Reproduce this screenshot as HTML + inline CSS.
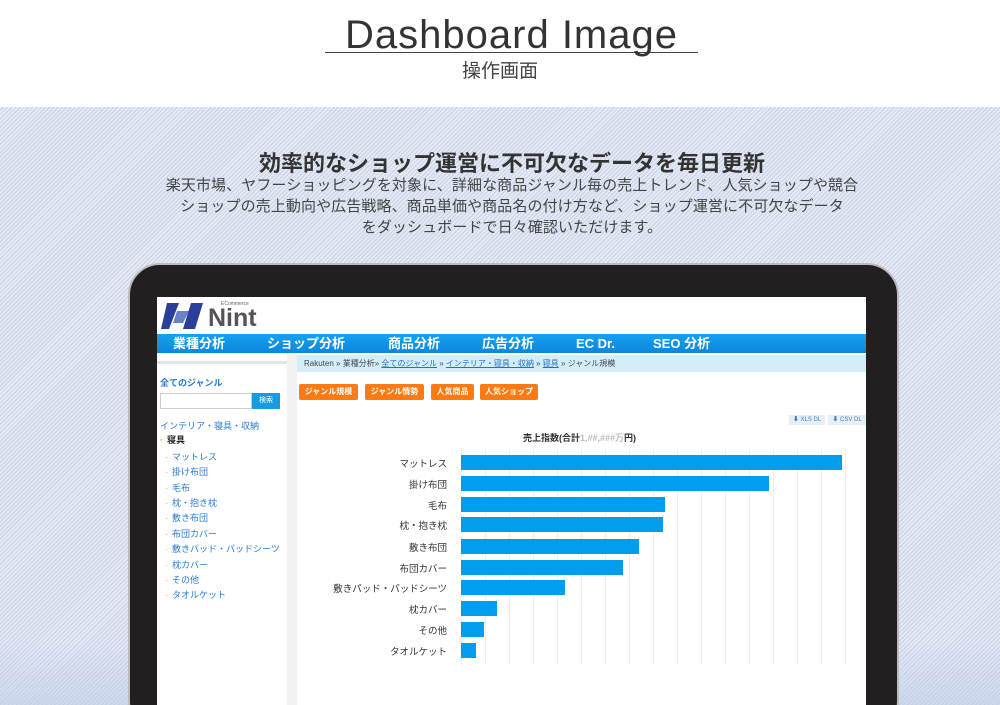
<!DOCTYPE html>
<html><head><meta charset="utf-8"><style>
*{margin:0;padding:0;box-sizing:border-box}
html,body{width:1000px;height:705px;overflow:hidden}
body{background:#fff;font-family:"Liberation Sans","Noto Sans CJK JP",sans-serif;position:relative}
.abs{position:absolute}
.bg{left:0;top:107px;width:1000px;height:598px;background:repeating-linear-gradient(135deg,#e4e9f4 0px,#e4e9f4 2px,#c8d2e8 2px,#c8d2e8 3px)}
.bgb{left:0;top:640px;width:1000px;height:65px;background:linear-gradient(180deg,rgba(200,212,232,0),rgba(190,205,230,.6))}
h1{position:absolute;left:325px;top:12px;width:373px;text-align:center;font-weight:normal;font-size:40px;letter-spacing:1px;color:#333;line-height:46px;border-bottom:1.5px solid #444;height:41px}
.sub{left:0;width:1000px;top:56px;text-align:center;font-size:19px;color:#444}
.h2{left:12px;width:1000px;top:146px;text-align:center;font-size:22px;font-weight:bold;color:#333}
.p{left:12px;width:1000px;top:175px;text-align:center;font-size:15px;line-height:21px;color:#444;letter-spacing:0.1px}
.bezel{left:128px;top:263px;width:771px;height:470px;background:#231f20;border-radius:32px;border:2px solid #bbb}
.screen{left:157px;top:297px;width:709px;height:408px;background:#fff;overflow:hidden}
.nav{left:0;top:37px;width:709px;height:19px;background:linear-gradient(#1aa0f0,#0a88dc);color:#fff;font-weight:bold;font-size:13px;line-height:19px}
.nav span{position:absolute;top:0}
.side{left:0;top:64px;width:130px;height:344px;background:#fff;border-top:3px solid #dde6ee}
.gcol{left:130px;top:56px;width:10px;height:352px;background:#f2f2f2}
.bc{left:140px;top:58px;width:569px;height:17px;background:#d3eef6;font-size:8px;color:#445;line-height:17px;padding-left:7px}
.bc u{color:#2a70c0}
.btn{top:87px;height:16px;background:#ff7a10;color:#fff;font-size:8px;font-weight:bold;line-height:16px;text-align:center;border-radius:2px}
.sl{font-size:9px;color:#2a7bd0;position:absolute;left:8px}
.dot{color:#f5a030;margin-right:4px}
.lab{position:absolute;right:0;font-size:9.5px;color:#333;text-align:right;width:150px}
.bar{position:absolute;left:0;height:15px;background:#019ef0}
</style></head><body>
<h1>Dashboard Image</h1>
<div class="abs sub">操作画面</div>
<div class="abs bg"></div>
<div class="abs bgb"></div>
<div class="abs h2">効率的なショップ運営に不可欠なデータを毎日更新</div>
<div class="abs p">楽天市場、ヤフーショッピングを対象に、詳細な商品ジャンル毎の売上トレンド、人気ショップや競合<br>ショップの売上動向や広告戦略、商品単価や商品名の付け方など、ショップ運営に不可欠なデータ<br>をダッシュボードで日々確認いただけます。</div>
<div class="abs bezel"></div>
<div class="abs screen">
 <svg class="abs" style="left:4px;top:6px" width="44" height="26" viewBox="0 0 44 26"><polygon points="6,0 18,0 8,26 0,26" fill="#2a3f9a"/><polygon points="16,8 28,8 22,20 12,20" fill="#6a80c8"/><polygon points="30,0 42,0 34,26 22,26" fill="#2a3f9a"/></svg>
 <div class="abs" style="left:51px;top:7px;font-size:25px;font-weight:bold;color:#555;line-height:28px">Nint</div>
 <div class="abs" style="left:64px;top:4px;font-size:5px;color:#666">ECommerce</div>
 <div class="abs nav"><span style="left:16px">業種分析</span><span style="left:110px">ショップ分析</span><span style="left:231px">商品分析</span><span style="left:325px">広告分析</span><span style="left:419px">EC Dr.</span><span style="left:496px">SEO 分析</span></div>
 <div class="abs gcol"></div>
 <div class="abs side">
  <div class="sl" style="left:3px;top:12px;font-weight:bold">全てのジャンル</div>
  <div class="abs" style="left:3px;top:29px;width:92px;height:16px;border:1px solid #ccc"></div>
  <div class="abs" style="left:95px;top:29px;width:28px;height:16px;background:#1a9ae0;color:#fff;font-size:7px;line-height:16px;text-align:center">検索</div>
  <div class="sl" style="left:3px;top:55px">インテリア・寝具・収納</div>
  <div class="sl" style="left:3px;top:69px;color:#222;font-weight:bold"><span class="dot">·</span>寝具</div>
  <div class="sl" style="top:86px"><span class="dot">·</span>マットレス</div>
  <div class="sl" style="top:101px"><span class="dot">·</span>掛け布団</div>
  <div class="sl" style="top:117px"><span class="dot">·</span>毛布</div>
  <div class="sl" style="top:132px"><span class="dot">·</span>枕・抱き枕</div>
  <div class="sl" style="top:147px"><span class="dot">·</span>敷き布団</div>
  <div class="sl" style="top:163px"><span class="dot">·</span>布団カバー</div>
  <div class="sl" style="top:178px"><span class="dot">·</span>敷きパッド・パッドシーツ</div>
  <div class="sl" style="top:194px"><span class="dot">·</span>枕カバー</div>
  <div class="sl" style="top:209px"><span class="dot">·</span>その他</div>
  <div class="sl" style="top:224px"><span class="dot">·</span>タオルケット</div>
 </div>
 <div class="abs bc">Rakuten » 業種分析» <u>全てのジャンル</u> » <u>インテリア・寝具・収納</u> » <u>寝具</u> » ジャンル規模</div>
 <div class="abs btn" style="left:142px;width:59px">ジャンル規模</div>
 <div class="abs btn" style="left:208px;width:59px">ジャンル情勢</div>
 <div class="abs btn" style="left:274px;width:43px">人気商品</div>
 <div class="abs btn" style="left:323px;width:58px">人気ショップ</div>
 <div class="abs" style="left:632px;top:118px;width:36px;height:10px;background:#e6eef6;font-size:6px;color:#4a80c0;line-height:10px;text-align:center">⬇ XLS DL</div>
 <div class="abs" style="left:671px;top:118px;width:38px;height:10px;background:#e6eef6;font-size:6px;color:#4a80c0;line-height:10px;text-align:center">⬇ CSV DL</div>
 <div class="abs" style="left:366px;top:134px;font-size:9px;font-weight:bold;color:#333">売上指数(合計<span style="color:#bbb">1,##,###万</span>円)</div>
 <div class="abs" style="left:304px;top:151px;width:386px;height:216px;background:repeating-linear-gradient(90deg,#eeeeee 0,#eeeeee 1px,transparent 1px,transparent 24px)"></div>
 <div class="abs" style="left:304px;top:151px;width:0;height:216px">
  <div class="bar" style="top:7px;width:381px"></div>
  <div class="bar" style="top:28px;width:308px"></div>
  <div class="bar" style="top:49px;width:204px"></div>
  <div class="bar" style="top:69px;width:202px"></div>
  <div class="bar" style="top:91px;width:178px"></div>
  <div class="bar" style="top:112px;width:162px"></div>
  <div class="bar" style="top:132px;width:104px"></div>
  <div class="bar" style="top:153px;width:36px"></div>
  <div class="bar" style="top:174px;width:23px"></div>
  <div class="bar" style="top:195px;width:15px"></div>
 </div>
 <div class="abs" style="left:140px;top:151px;width:150px;height:216px">
  <div class="lab" style="top:8px">マットレス</div>
  <div class="lab" style="top:29px">掛け布団</div>
  <div class="lab" style="top:50px">毛布</div>
  <div class="lab" style="top:70px">枕・抱き枕</div>
  <div class="lab" style="top:92px">敷き布団</div>
  <div class="lab" style="top:113px">布団カバー</div>
  <div class="lab" style="top:133px">敷きパッド・パッドシーツ</div>
  <div class="lab" style="top:154px">枕カバー</div>
  <div class="lab" style="top:175px">その他</div>
  <div class="lab" style="top:196px">タオルケット</div>
 </div>
</div>
</body></html>
